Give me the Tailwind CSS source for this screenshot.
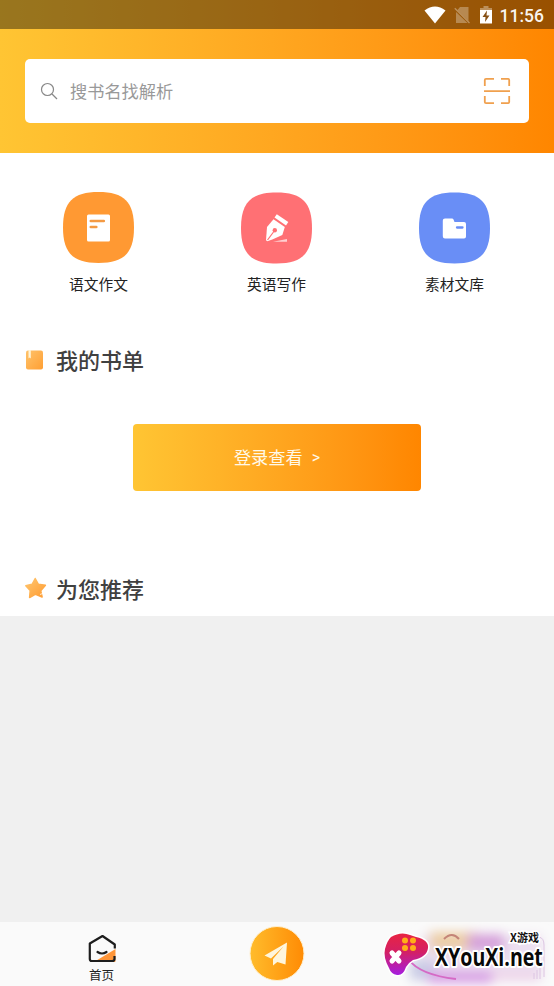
<!DOCTYPE html>
<html lang="zh-CN">
<head>
<meta charset="utf-8">
<title>首页</title>
<script src="https://cdn.jsdelivr.net/npm/@tailwindcss/browser@4"></script>
</head>
<body class="bg-[#f0f0f0] font-['Noto_Sans_CJK_SC',sans-serif]">
<div class="flex h-[986px] w-[554px] flex-col overflow-hidden">
  <header class="h-[153px] shrink-0 bg-linear-to-r from-[#ffc533] to-[#ff8600]">
    <div class="flex h-[29px] items-center justify-end bg-black/40 pr-[10px] text-white">
      <svg class="mr-2 h-[18px] w-[22px]" viewBox="0 0 22 18"><path d="M.5 4.500Q11-3.500 21.500 4.500L11 17.500Z" fill="#fff"/></svg>
      <svg class="mr-[10px] h-[18px] w-4" viewBox="0 0 16 18"><path d="M6 1h8.500v14L3.500 4ZM2 6v11h11.500Z" fill="#fff" opacity=".3"/><path d="M.8 2.300 15.500 17" stroke="#fff" stroke-opacity=".35" stroke-width="1.300"/></svg>
      <svg class="mr-[8px] h-[18px] w-3" viewBox="0 0 12 18"><path d="M3.500 0h5v2H12v4H0V2h3.500Z" fill="#fff" opacity=".35"/><path d="M0 4h12v13.500H0Z" fill="#fff"/><path d="M7 4.500 2.500 11H5.500L5 16 9.500 9.500H6.500Z" fill="#875116"/></svg>
      <span class="pt-[3px] font-[Roboto,sans-serif] text-[17.500px] leading-5 font-medium text-white/95">11:56</span>
    </div>
    <div class="px-[25px] pt-[30px]">
      <div class="flex h-16 items-center rounded-[5px] bg-white pr-[18px] pl-[15px]">
        <svg class="size-[18px]" viewBox="0 0 18 18" fill="none" stroke="#888" stroke-width="1.200"><circle cx="7.500" cy="7.500" r="6"/><path d="m12 12 5 5"/></svg>
        <span class="ml-3 flex-1 text-[17.200px] leading-6 text-[#999]">搜书名找解析</span>
        <svg class="size-7" viewBox="0 0 28 28" fill="none" stroke="#f0a04e" stroke-width="1.800"><path d="M1.800 9V3q0-1.200 1.200-1.200h8M18 1.800h7q1.200 0 1.200 1.200v6M1.800 19v6q0 1.200 1.200 1.200h8M18 26.200h7q1.200 0 1.200-1.200v-6M1 14.200h26"/></svg>
      </div>
    </div>
  </header>
  <main class="h-[463px] shrink-0 bg-white">
    <nav class="flex justify-between pt-[38px] pr-[63px] pl-[62px] text-[14.700px] leading-5 text-[#222]">
      <div class="flex w-[73px] flex-col items-center">
        <svg class="size-[73px]" viewBox="0 0 73 73"><path d="M36.500 1C62 1 72 11 72 36.500S62 72 36.500 72 1 62 1 36.500 11 1 36.500 1Z" fill="#ff9933"/><rect x="25" y="23.500" width="23" height="27" rx="1.500" fill="#fff"/><path d="M28.800 30h13M28.800 36h5.500" stroke="#f49a43" stroke-width="2.600" stroke-linecap="round"/></svg>
        <span class="mt-[10px] whitespace-nowrap">语文作文</span>
      </div>
      <div class="flex w-[73px] flex-col items-center">
        <svg class="size-[73px]" viewBox="0 0 73 73"><path d="M36.500 1.500C62 1.500 72 11.500 72 37S62 72.500 36.500 72.500 1 62.500 1 37 11 1.500 36.500 1.500Z" fill="#ff7074"/><path d="m34.500 26.500 2.300-3.300 11.500 7.800-2.300 3.600Z" fill="#fff"/><path d="m33.500 28.200 11.300 7.700-2.500 8-10 4.600-5 1.800-1.300-1 1-13.200Z" fill="#fff"/><path d="m27.500 49 6-8" stroke="#ff7074" stroke-width="1.200"/><circle cx="34.800" cy="39.300" r="2.200" fill="#ff7074"/><path d="m33 50.700 14-2.600V50.700Z" fill="#ffd0d1"/></svg>
        <span class="mt-[10px] whitespace-nowrap">英语写作</span>
      </div>
      <div class="flex w-[73px] flex-col items-center">
        <svg class="size-[73px]" viewBox="0 0 73 73"><path d="M36.500 1.500C62 1.500 72 11.500 72 37S62 72.500 36.500 72.500 1 62.500 1 37 11 1.500 36.500 1.500Z" fill="#698ef6"/><path d="M27 27.500h7q1 0 1.500 1l1 2.500h9.500q2 0 2 2v12.500q0 2-2 2H27q-2.200 0-2.200-2.200V29.500q0-2 2.200-2Z" fill="#fff"/><path d="M39 36.500h5.500" stroke="#698ef6" stroke-width="2.300" stroke-linecap="round"/></svg>
        <span class="mt-[10px] whitespace-nowrap">素材文库</span>
      </div>
    </nav>
    <section class="mt-[50px] px-[25px]">
      <h2 class="flex h-8 items-center text-[22px] leading-8 font-medium text-[#404040]">
        <svg class="mr-3 h-5 w-[19px]" viewBox="0 0 19 20"><defs><linearGradient id="book" x1="0" y1="0" x2="1" y2="1"><stop stop-color="#ffc36b"/><stop offset="1" stop-color="#ff9f33"/></linearGradient></defs><rect x="1" y=".5" width="17" height="19" rx="2" fill="url(#book)"/><path d="M3.500 0h2.300v8.500L4.600 7.500 3.500 8.500Z" fill="#fff4d8"/></svg>
        <span class="-mt-[3px]">我的书单</span>
      </h2>
      <button class="mx-auto mt-12 flex h-[67px] w-[288px] items-center justify-center rounded-[4px] bg-linear-to-r from-[#ffc533] to-[#ff8600] pb-[2px] text-[17.200px] text-[#fff9e8]">登录查看<span class="mt-[3px] ml-[9px] font-[Roboto,sans-serif] text-base">&gt;</span></button>
    </section>
    <section class="mt-[82px] px-[25px]">
      <h2 class="flex h-8 items-center text-[22px] leading-8 font-medium text-[#404040]">
        <svg class="mr-[9px] -mt-[2px] h-[22px] w-[22px]" viewBox="0 0 22 22"><defs><linearGradient id="star" x1="0" y1="0" x2="1" y2="1"><stop stop-color="#ffc66f"/><stop offset="1" stop-color="#ff9c32"/></linearGradient></defs><path d="m10.200 1.500 3.200 5.800 7 .9-4.700 5.500 1.400 6.300-6.500-2.800-6 3.300.6-7L.8 8.800l6.300-1.500Z" fill="url(#star)" stroke="url(#star)" stroke-width="1.500" stroke-linejoin="round"/><path d="m15 17.500 5-2" stroke="#fff" stroke-width=".8"/></svg>
        <span class="-mt-[3px]">为您推荐</span>
      </h2>
    </section>
  </main>
  <div class="flex-1"></div>
  <footer class="relative flex h-16 shrink-0 bg-[#fafafa]">
    <div class="flex w-[203px] flex-col items-center pt-3">
      <svg class="h-[30px] w-[30px]" viewBox="0 0 30 30"><path d="m28.500 15v12q0 1-1 1H7Z" fill="#ff9538"/><path d="M27.800 14.500V10.500L15.500 2 2.800 9.500v15.500q0 2 2 2H25q2.500 0 2.500-2V22" fill="none" stroke="#1d1d1d" stroke-width="2.200" stroke-linejoin="round"/><path d="M10.500 18q4.500 3 9 0" fill="none" stroke="#1d1d1d" stroke-width="2.200" stroke-linecap="round"/></svg>
      <span class="mt-[2px] text-[12.500px] leading-[18px] text-[#222]">首页</span>
    </div>
    <div class="ml-[46px] pt-1">
      <svg class="size-14" viewBox="0 0 56 56"><defs><linearGradient id="send"><stop stop-color="#ffbc2c"/><stop offset="1" stop-color="#ff8b04"/></linearGradient></defs><circle cx="28" cy="27.500" r="27" fill="url(#send)" stroke="#fff0cf"/><path d="M38 16.500 15.500 29.500l6.500 3L34.500 20.500 24 33v6.500l4.300-3.500 8.200 2.500Z" fill="#fff6dc"/></svg>
    </div>
    <div class="absolute top-0 right-0 h-16 w-[180px]">
      <svg class="h-16 w-[180px]" viewBox="0 0 180 64"><defs><filter id="soft" x="-20%" y="-50%" width="140%" height="200%"><feGaussianBlur stdDeviation="5.500"/></filter><linearGradient id="pad" x1="0" y1="0" x2="0" y2="1"><stop stop-color="#e82442"/><stop offset=".45" stop-color="#d32065"/><stop offset="1" stop-color="#a51ee0"/></linearGradient></defs>
        <g filter="url(#soft)"><path d="M48 13h120v46H43Z" fill="#ecdff0"/><path d="M56 10h48v18H56Z" fill="#eccda5"/><path d="M94 12h36v17H94Z" fill="#d5a0da"/><path d="M36 38h25v20H36Z" fill="#c9cce5"/><path d="M54 49h65v12H54Z" fill="#d79ce4"/><path d="M118 50h46v9h-46Z" fill="#eed3e9"/></g>
        <path d="M70 17q8-8 15 0" fill="none" stroke="#c48578" stroke-width="2"/>
        <path d="M165 15q5 1 5 8v32M160 57v-6m3 6v-9m3 9V46" fill="none" stroke="#dcc4e2" stroke-width="1"/>
        <path d="M34 37q12 16 48 20" fill="none" stroke="#d56ac5" stroke-width="2"/>
        <path d="M17 15q10-6 19-2l6 2q13 3 12 11-1 9-15 12-5 3-7 7-3 9-9 8-6-1-8-7-6-11-4-19 2-8 6-12Z" fill="url(#pad)" stroke="#fff" stroke-width="3" paint-order="stroke"/>
        <g fill="#ffae18"><circle cx="31" cy="18.500" r="3"/><circle cx="39" cy="18.500" r="3"/><circle cx="31" cy="26" r="3"/><circle cx="39" cy="26" r="3"/></g>
        <path d="m18 31 7 8m0-8-7 8" stroke="#fff" stroke-width="5" stroke-linecap="round"/>
        <text x="136" y="20" font-family="Noto Sans CJK SC, sans-serif" font-size="11" font-weight="700" fill="#111" stroke="#fff" stroke-width="3" paint-order="stroke">X游戏</text>
        <text transform="translate(61 44) scale(.8 1)" font-family="Open Sans, sans-serif" font-size="24.500" font-weight="700" fill="#080808" stroke="#fff" stroke-width="4" stroke-linejoin="round" paint-order="stroke">XYouXi.net</text>
      </svg>
    </div>
  </footer>
</div>
</body>
</html>
